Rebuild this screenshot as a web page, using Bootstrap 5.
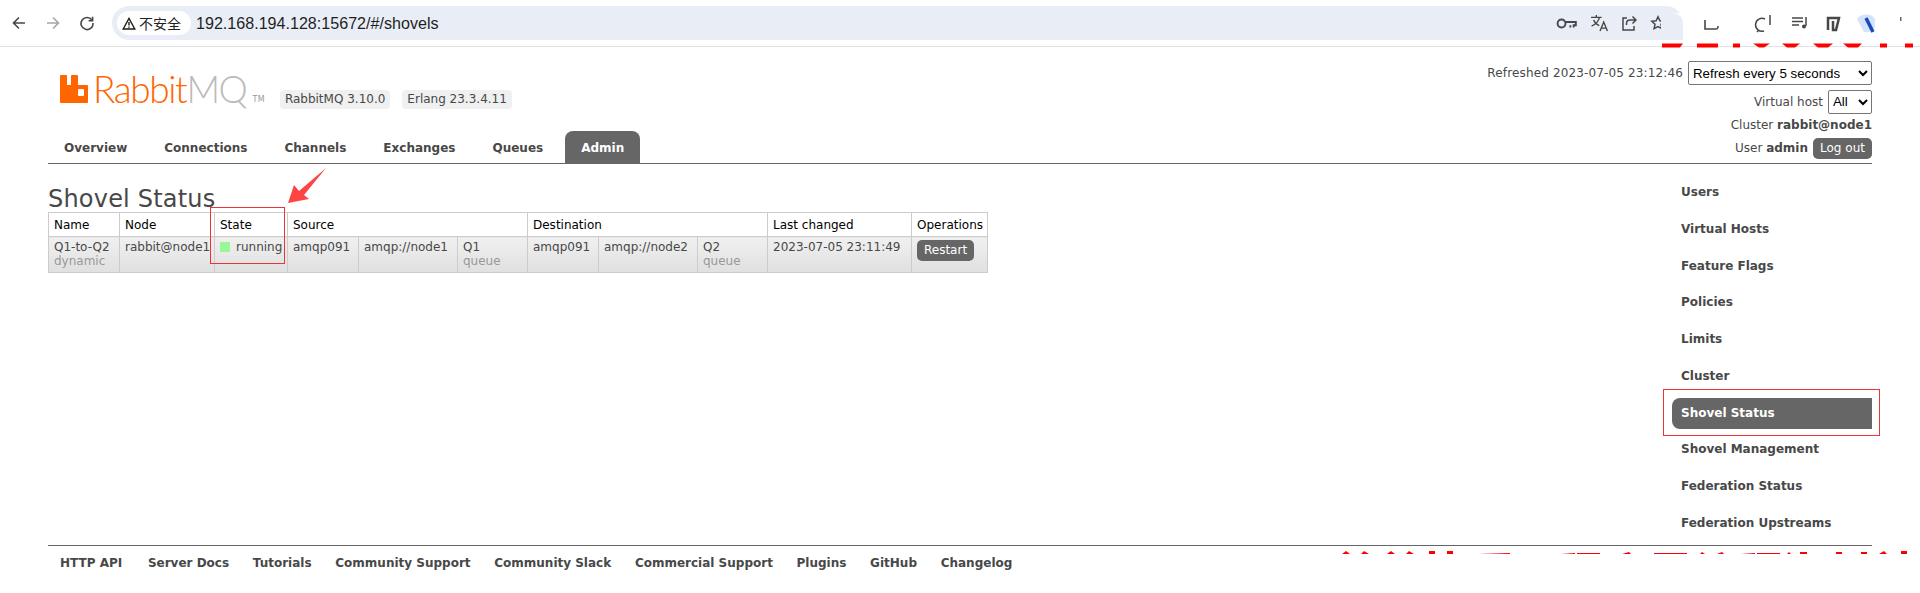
<!DOCTYPE html>
<html lang="zh">
<head>
<meta charset="utf-8">
<title>RabbitMQ Management</title>
<link href="https://cdn.jsdelivr.net/npm/bootstrap@5.3.0/dist/css/bootstrap.min.css" rel="stylesheet">
<style>
html,body{height:593px;overflow:hidden;background:#fff}
body{font-family:"DejaVu Sans",Verdana,sans-serif;font-size:12px;color:#484848;position:relative}
a{color:#484848;text-decoration:none}
.chrome-bar{height:47px;border-bottom:1px solid #dfe1e5;padding:6px 0 6px 2px}
.chrome-btn{width:34px;flex:none}
.omnibox{margin-left:8px;width:1571px;height:34px;border-radius:17px;background:#e9eef6;padding:5px 5px;font-family:"Liberation Sans",Arial,sans-serif;font-size:14px;color:#1f1f1f}
.secure-chip{width:74px;height:24px;border-radius:12px;background:#fff;gap:3px;font-family:"Noto Sans CJK SC","Liberation Sans",sans-serif;font-size:14px;padding-left:5px;white-space:nowrap}
.url-text{margin-left:5px;font-size:16.1px}
.omni-icons{margin-left:auto;gap:13px;padding-right:12px}
.shell{padding:0 48px}
.head-area{height:117px;border-bottom:1px solid #666;position:relative}
.logo-row{padding:27px 0 0 12px;height:84px}
.logo-mark{width:28px;height:28px;margin-top:1px;flex:none}
.logo-word{font-family:Lato,"Open Sans",sans-serif;font-weight:300;font-size:37px;line-height:30px;letter-spacing:-1.4px;color:#f60;margin-left:5px;white-space:nowrap}
.logo-word span{color:#bbb}
.logo-tm{font-size:8px;color:#999;margin:20px 0 0 6px;letter-spacing:.3px}
.ver-chip{background:#f0f0f0;border-radius:4px;padding:0 5px;height:19px;line-height:19px;margin-top:16px;white-space:nowrap}
.ver-first{margin-left:15px}.ver-next{margin-left:12px}
.tab-row{gap:0;padding-left:0}
.tab-link{height:32px;line-height:34px;padding:0 16px;font-weight:700;margin-right:5px;white-space:nowrap}
.tab-link.is-on{background:#666;color:#fff;border-radius:8px 8px 0 0;margin:0 0 0 1px}
.status-box{position:absolute;right:0;top:14px;text-align:right;display:flex;flex-direction:column;align-items:flex-end}
.status-line{display:flex;align-items:center;justify-content:flex-end;gap:5px;white-space:nowrap}
.stamp{letter-spacing:.14px}
.sel-fake{font-family:"Liberation Sans",Arial,sans-serif;font-size:13.3px;color:#000;border:1px solid #767676;border-radius:2px;height:24px;padding:0;background:#fff}
.sel-refresh{width:184px}.sel-vhost{width:44px}
.l1{height:24px}.l2{height:25px;margin-top:4px}.l3{height:22px}.l4{height:24px;margin-top:0}
.logout-btn{background:#666;color:#fff;border:0;border-radius:5px;height:21px;width:59px;font-size:12px;padding:0;font-family:inherit;line-height:21px}
.main-wrap{height:381px;position:relative}
.page-col{flex:1;min-width:0}
.page-title{font-family:inherit;font-size:24px;font-weight:400;line-height:28px;margin:21px 0 0;height:27px;color:#484848;letter-spacing:.2px}
.shovel-table{border-collapse:collapse;table-layout:fixed;width:939px;font-size:12px;margin-top:0;color:#484848}
.shovel-table th,.shovel-table td{border:1px solid #ccc;padding:4px 5px;vertical-align:top;line-height:15px;white-space:nowrap;overflow:hidden}
.shovel-table th{font-weight:400;height:24px;color:#000;background:#fff;padding:5px 5px 3px}
.shovel-table td{height:36px;background:linear-gradient(#f0f0f0,#e0e0e0);padding:3px 5px 2px;line-height:14px}
.sub{display:block;color:#999}
.dot{display:inline-block;width:10px;height:10px;background:#98f898;margin-right:6px;vertical-align:-1px}
.restart-btn{display:inline-block;background:#666;color:#fff;border:0;border-radius:5px;height:21px;width:57px;line-height:21px;text-align:center;font-size:12px;padding:0;font-family:inherit}
.side-col{width:200px;flex:none;padding-top:13px}
.side-item{display:block;height:31px;line-height:31px;padding-left:9px;margin-bottom:5.75px;font-weight:700;font-size:12px;white-space:nowrap}
.side-item.is-on{background:#666;color:#fff;border-radius:8px 0 0 8px}
.foot-row{border-top:1px solid #666;padding:2px 12px 0;gap:23.7px;height:32px;align-items:center;font-weight:700;font-size:12px;white-space:nowrap}
.foot-first{margin-right:2px}
.mark-box{position:absolute;border:1px solid #e33;pointer-events:none}
.mark-state{left:210px;top:207px;width:75px;height:57px}
.mark-side{left:1663px;top:389px;width:217px;height:47px}
.mark-arrow{position:absolute;left:285px;top:165px;width:45px;height:42px}
.wm-top{position:absolute;left:1661px;top:13px;width:259px;height:35px}
.wm-foot{position:absolute;left:1320px;top:540px;width:600px;height:30px}
</style>
</head>
<body>
<div class="chrome-bar d-flex align-items-center">
  <div class="chrome-btn d-flex justify-content-center"><svg width="16" height="16" viewBox="0 0 16 16" fill="none" stroke="#474747" stroke-width="1.6"><path d="M14 8H2.5M8 2.5 2.5 8 8 13.5"/></svg></div>
  <div class="chrome-btn d-flex justify-content-center"><svg width="16" height="16" viewBox="0 0 16 16" fill="none" stroke="#a6a6a6" stroke-width="1.6"><path d="M2 8h11.5M8 2.5 13.5 8 8 13.5"/></svg></div>
  <div class="chrome-btn d-flex justify-content-center"><svg width="16" height="16" viewBox="0 0 16 16" fill="none" stroke="#474747" stroke-width="1.6"><path d="M13 5.2A6 6 0 1 0 14 8"/><path d="M13.6 1.8v4h-4"/></svg></div>
  <div class="omnibox d-flex align-items-center">
    <div class="secure-chip d-flex align-items-center"><svg width="14" height="13" viewBox="0 0 14 13" fill="none" stroke="#1f1f1f" stroke-width="1.4"><path d="M7 1.4 1.2 12h11.6Z"/><path d="M7 5v3.6M7 9.6v1.2"/></svg><span>不安全</span></div>
    <span class="url-text">192.168.194.128:15672/#/shovels</span>
    <div class="omni-icons d-flex align-items-center">
      <svg width="21" height="11" viewBox="0 0 19 10" fill="none" stroke="#474747" stroke-width="1.7"><circle cx="5" cy="5" r="3.6"/><path d="M9 3.6h9v3h-2v2M13 6.6v2"/></svg>
      <svg width="19" height="18" viewBox="0 0 18 17" fill="none" stroke="#474747" stroke-width="1.3"><path d="M1 3.2h10M6 1v2.2M9 3.2C8 7 5 10 1.5 11.5M3.4 5.6c1 2.4 3 4.4 5.4 5.4"/><path d="M9.5 16 13 7.5 16.5 16M10.7 13.4h4.6"/></svg>
      <svg width="15" height="16" viewBox="0 0 15 16" fill="none" stroke="#474747" stroke-width="1.5"><path d="M5 3H1v12h11v-4"/><path d="M4.5 10V8.5C4.5 6.5 6 5 8 5h6M10.5 1.5 14 5l-3.500 3.500"/></svg>
      <svg width="16" height="16" viewBox="0 0 16 16" fill="none" stroke="#474747" stroke-width="1.5"><path d="M8 1.8l1.9 4 4.3.5-3.2 3 .9 4.3L8 11.5l-3.9 2.1.9-4.3-3.2-3 4.3-.5Z"/></svg>
    </div>
  </div>
</div>

<div class="shell">
  <div class="head-area">
    <div class="logo-row d-flex align-items-start">
      <svg class="logo-mark" viewBox="0 0 28 28"><path fill="#f60" fill-rule="evenodd" d="M1 0h5a1 1 0 0 1 1 1v9h4V1a1 1 0 0 1 1-1h5a1 1 0 0 1 1 1v9h9a1 1 0 0 1 1 1v16a1 1 0 0 1-1 1H1a1 1 0 0 1-1-1V1a1 1 0 0 1 1-1Zm17 15v5a1 1 0 0 0 1 1h4a1 1 0 0 0 1-1v-5a1 1 0 0 0-1-1h-4a1 1 0 0 0-1 1Z"/></svg>
      <div class="logo-word">Rabbit<span>MQ</span></div>
      <div class="logo-tm">TM</div>
      <div class="ver-chip ver-first">RabbitMQ 3.10.0</div>
      <div class="ver-chip ver-next">Erlang 23.3.4.11</div>
    </div>
    <nav class="tab-row d-flex">
      <a class="tab-link" href="#">Overview</a>
      <a class="tab-link" href="#">Connections</a>
      <a class="tab-link" href="#">Channels</a>
      <a class="tab-link" href="#">Exchanges</a>
      <a class="tab-link" href="#">Queues</a>
      <a class="tab-link is-on" href="#">Admin</a>
    </nav>
    <div class="status-box">
      <div class="status-line l1"><span class="stamp">Refreshed 2023-07-05 23:12:46</span><select class="sel-fake sel-refresh"><option>Refresh every 5 seconds</option></select></div>
      <div class="status-line l2"><span>Virtual host</span><select class="sel-fake sel-vhost"><option>All</option></select></div>
      <div class="status-line l3"><span>Cluster <b>rabbit@node1</b></span></div>
      <div class="status-line l4"><span>User <b>admin</b></span><button class="logout-btn" type="button">Log out</button></div>
    </div>
  </div>

  <div class="main-wrap d-flex">
    <div class="page-col">
      <h1 class="page-title">Shovel Status</h1>
      <table class="shovel-table">
        <colgroup><col style="width:71px"><col style="width:95px"><col style="width:73px"><col style="width:71px"><col style="width:99px"><col style="width:70px"><col style="width:71px"><col style="width:99px"><col style="width:70px"><col style="width:144px"><col style="width:76px"></colgroup>
        <tr><th>Name</th><th>Node</th><th>State</th><th colspan="3">Source</th><th colspan="3">Destination</th><th>Last changed</th><th>Operations</th></tr>
        <tr>
          <td>Q1-to-Q2<span class="sub">dynamic</span></td>
          <td>rabbit@node1</td>
          <td><span class="dot"></span>running</td>
          <td>amqp091</td><td>amqp://node1</td><td>Q1<span class="sub">queue</span></td>
          <td>amqp091</td><td>amqp://node2</td><td>Q2<span class="sub">queue</span></td>
          <td>2023-07-05 23:11:49</td>
          <td><button class="restart-btn" type="button">Restart</button></td>
        </tr>
      </table>
    </div>
    <aside class="side-col">
      <a class="side-item" href="#">Users</a>
      <a class="side-item" href="#">Virtual Hosts</a>
      <a class="side-item" href="#">Feature Flags</a>
      <a class="side-item" href="#">Policies</a>
      <a class="side-item" href="#">Limits</a>
      <a class="side-item" href="#">Cluster</a>
      <a class="side-item is-on" href="#">Shovel Status</a>
      <a class="side-item" href="#">Shovel Management</a>
      <a class="side-item" href="#">Federation Status</a>
      <a class="side-item" href="#">Federation Upstreams</a>
    </aside>
  </div>

  <footer class="foot-row d-flex">
    <a class="foot-first" href="#">HTTP API</a><a href="#">Server Docs</a><a href="#">Tutorials</a><a href="#">Community Support</a><a href="#">Community Slack</a><a href="#">Commercial Support</a><a href="#">Plugins</a><a href="#">GitHub</a><a href="#">Changelog</a>
  </footer>
</div>

<div class="mark-box mark-state"></div>
<div class="mark-box mark-side"></div>
<svg class="mark-arrow" viewBox="0 0 45 42"><path fill="#f44" d="M3 38 9 20l5 6L41 3 19 30l5 4Z"/></svg>

<svg class="wm-top" viewBox="0 0 259 35">
  <rect x="0" y="0" width="259" height="33" fill="#fff"/>
  <path d="M0 0h10c8 0 12 4 12 11v16H0Z" fill="#e9eef6"/>
  <path d="M44 7v9h11c2 0 2-1 2-3" fill="none" stroke="#474747" stroke-width="1.6"/>
  <path d="M103 18a6.500 6.500 0 1 1 1-12M109 2v10M98 17l-2 2" fill="none" stroke="#474747" stroke-width="1.5"/>
  <path d="M131 5h11M131 8.500h11M131 12h7M145 4v9" fill="none" stroke="#474747" stroke-width="1.5"/><circle cx="143" cy="13.500" r="2" fill="#474747"/>
  <path d="M167 17V5h11l-3 12h-3V8" fill="none" stroke="#474747" stroke-width="2.500"/>
  <path d="M196 6c3-5 14-7 18 0v8c-3 5-8 6-11 5Z" fill="#d3e3fd"/><path d="M205 5l7 14" stroke="#1a4ab8" stroke-width="3.500"/>
  <rect x="239" y="4" width="1.500" height="4" fill="#666"/>
  <rect x="0" y="33" width="259" height="1" fill="#dfe1e5"/>
  <g fill="#f00">
    <path d="M1 30.500h21l-3 4H1Z"/><rect x="36" y="30.500" width="21" height="4"/><rect x="72" y="30.500" width="7" height="4"/><path d="M92 30.500h17l-6 4h-5Z"/><path d="M121 30.500h18l-5 4h-8Z"/><path d="M152 30.500h20l-5 4h-10Z"/><path d="M182 30.500h19l-4 4h-10Z"/><rect x="219" y="30.500" width="7" height="4"/><rect x="244" y="30.500" width="8" height="4"/>
  </g>
</svg>
<svg class="wm-foot" viewBox="0 0 600 30">
  <defs><linearGradient id="fadeRed"><stop offset="0" stop-color="#f00" stop-opacity="0"/><stop offset="1" stop-color="#f00"/></linearGradient></defs>
  <g fill="#f00">
    <path d="M22 14l4-3 4 3Z"/><path d="M41 14l3-3 5 3Z"/><path d="M67 14l4-3 4 3Z"/><path d="M86 14l3-3 5 3Z"/>
    <rect x="109" y="11" width="6" height="3"/><rect x="127" y="11" width="6" height="3"/>
    <rect x="158" y="13" width="32" height="1" fill="url(#fadeRed)"/><rect x="241" y="13" width="14" height="1" fill="url(#fadeRed)"/><rect x="257" y="13" width="23" height="1"/>
    <path d="M302 14l7-2 2 2Z"/><rect x="334" y="13" width="33" height="1"/><path d="M380 14l2-2 3 2Z"/><path d="M397 14l5-2 2 2Z"/>
    <rect x="421" y="13" width="14" height="1" fill="url(#fadeRed)"/><rect x="437" y="13" width="23" height="1"/><path d="M467 14l2-2 2 2Z"/>
    <rect x="480" y="12" width="7" height="2"/><rect x="516" y="12" width="6" height="2"/><rect x="541" y="12" width="6" height="2"/>
    <path d="M559 14l5-3 3 3Z"/><rect x="581" y="11" width="6" height="3"/>
  </g>
</svg>
<script src="https://cdn.jsdelivr.net/npm/bootstrap@5.3.0/dist/js/bootstrap.bundle.min.js"></script>
</body>
</html>
